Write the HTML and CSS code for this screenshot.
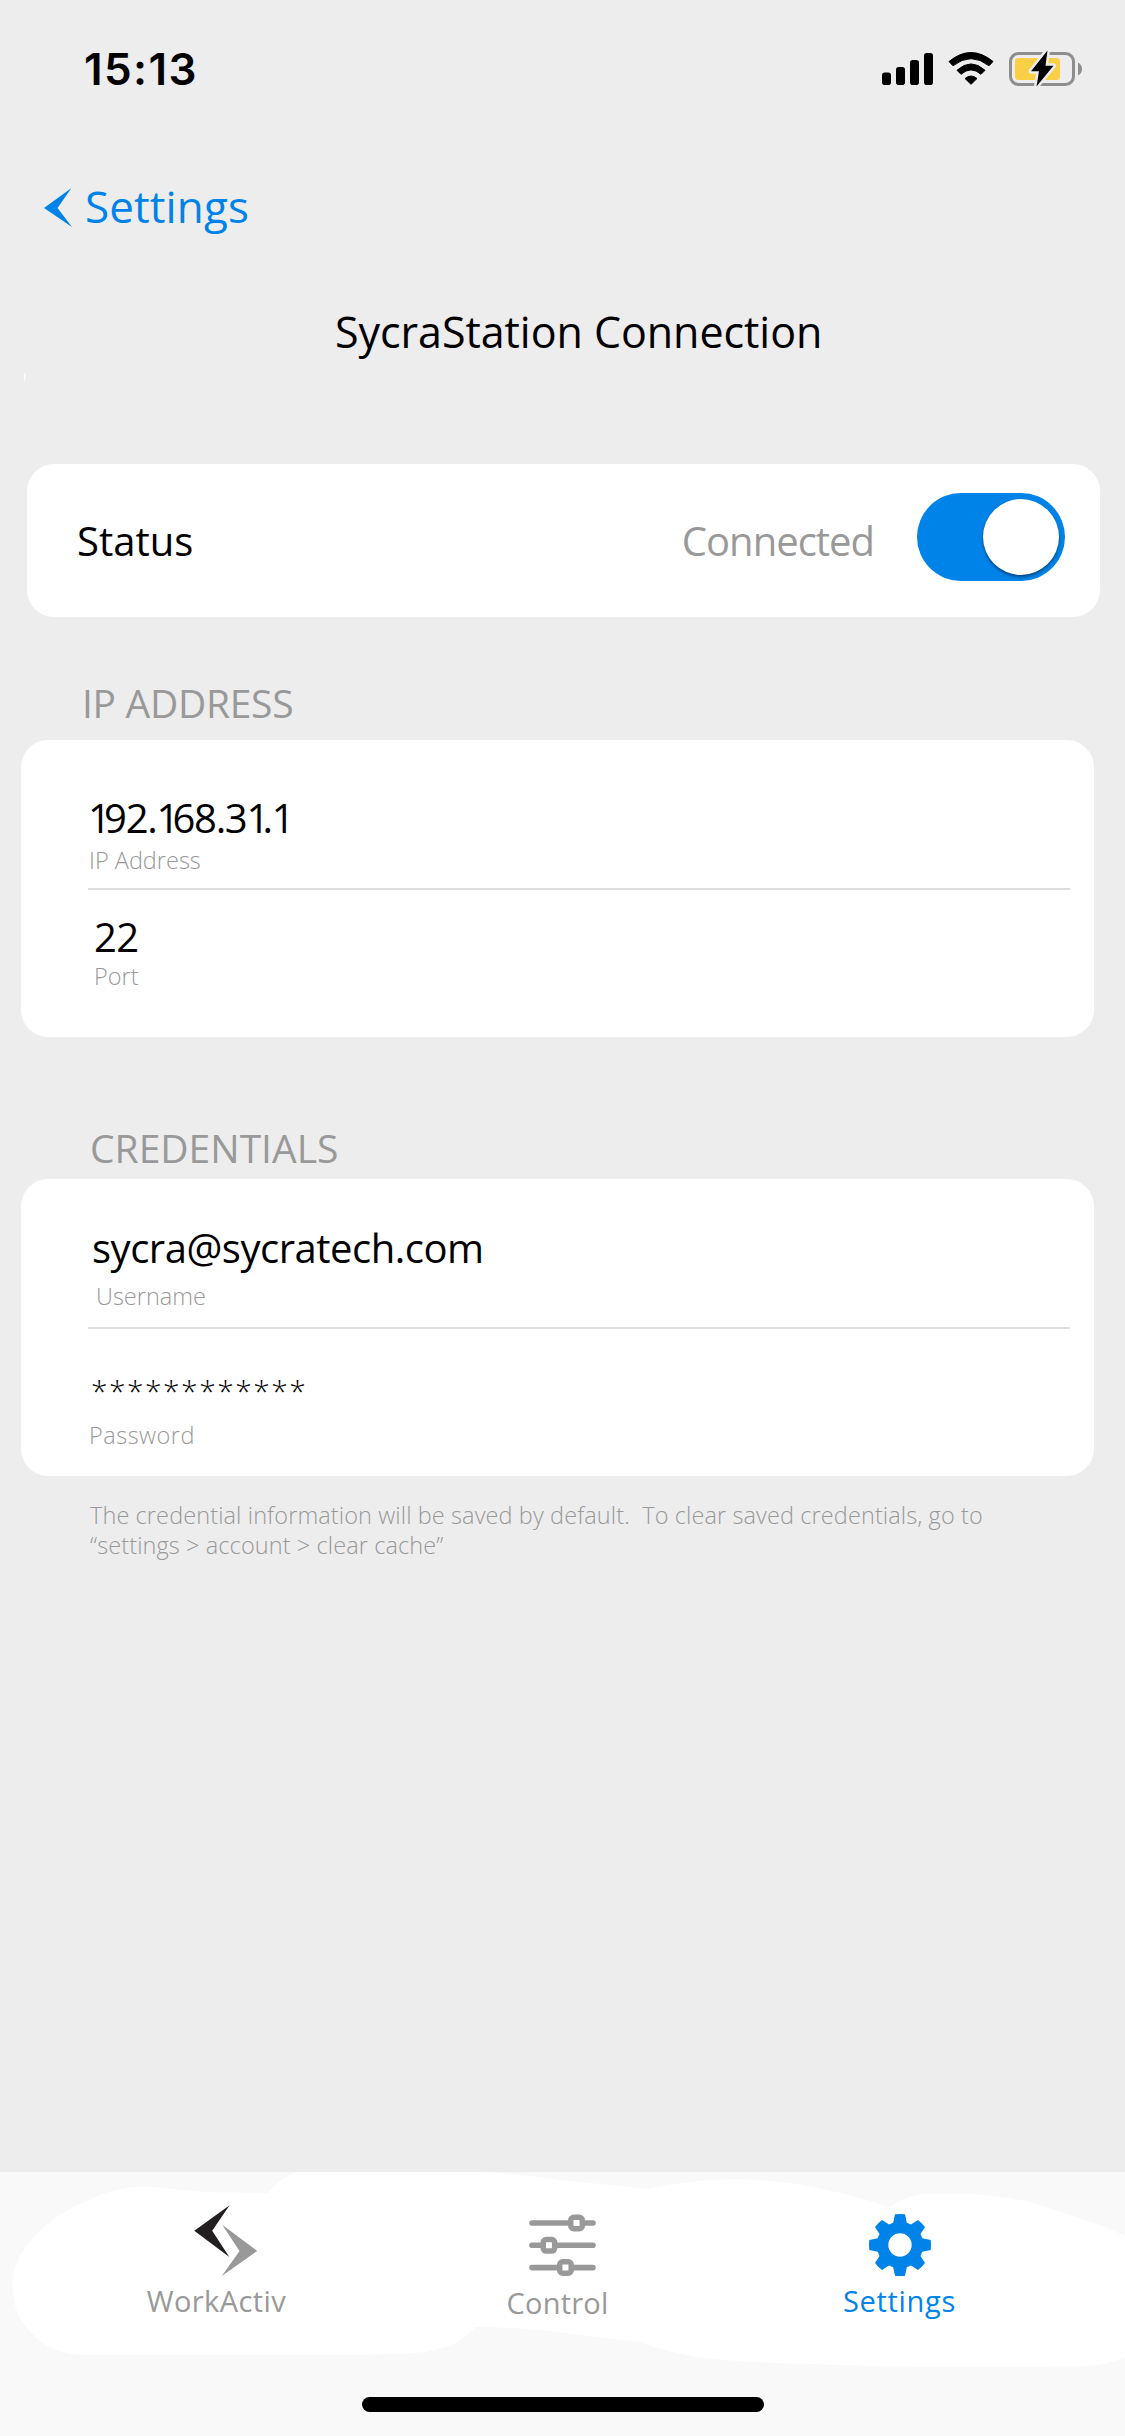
FILE: index.html
```html
<!DOCTYPE html>
<html lang="en">
<head>
<meta charset="utf-8">
<title>SycraStation Connection</title>
<link rel="stylesheet" href="styles.css">
</head>
<body>
<div class="screen">
  <header class="status-bar">
    <span class="time">15:13</span>
    <svg class="status-icons" width="204" height="40" viewBox="880 49 204 40">
      <rect x="882" y="72.5" width="9" height="12.5" rx="2.8"/>
      <rect x="896" y="67" width="9" height="18" rx="2.8"/>
      <rect x="910" y="60" width="9" height="25" rx="2.8"/>
      <rect x="924" y="53" width="9" height="32" rx="2.8"/>
      <path d="M949 61.500Q971 43.500 993 61.500L989 65.800Q971 51.500 953 65.800Z" stroke="#000" stroke-linejoin="round"/>
      <path d="M957 70.300Q971 57.500 985 70.300L981 74.300Q971 65.500 961 74.300Z" stroke="#000" stroke-linejoin="round"/>
      <path d="M965 78.500Q971 73.500 977 78.500L971 84.300Z" stroke="#000" stroke-linejoin="round"/>
      <rect x="1010.500" y="53.500" width="63" height="31" rx="8" fill="none" stroke="#8e8e8e" stroke-width="3"/>
      <rect x="1015" y="58" width="45" height="22" rx="3.500" fill="#f9cf45"/>
      <path d="M1078 62.500Q1082 64.500 1082 69Q1082 73.500 1078 75.500Z" fill="#8e8e8e"/>
      <path d="M1047.500 50.500L1031 71.200H1039L1036.500 86.500L1053.500 65.800H1045.500Z" fill="#000" stroke="#ededed" stroke-width="5" stroke-linejoin="round" paint-order="stroke"/>
    </svg>
  </header>

  <a class="back">
    <svg width="29" height="40" viewBox="44 189 29 40"><path d="M44 209L71.500 189L57.500 209L72 228Z" fill="#0083e8"/></svg>
    <span>Settings</span>
  </a>
  <h1 class="title">SycraStation Connection</h1>
  <svg class="fleck" width="3" height="12" viewBox="0 0 3 12"><path d="M0 0L2 4L0 11Z" fill="#fff"/></svg>

  <section class="card status-card">
    <span>Status</span>
    <span class="status-state">Connected</span>
    <span class="toggle"><span class="knob"></span></span>
  </section>

  <h2 class="section-title">IP ADDRESS</h2>
  <section class="card ip-card">
    <div class="value ip"><span class="one">1</span>92.<span class="one">1</span>68.3<span class="one">1</span>.1</div>
    <div class="label ip-label">IP Address</div>
    <hr class="divider">
    <div class="value port">22</div>
    <div class="label port-label">Port</div>
  </section>

  <h2 class="section-title cred-title">CREDENTIALS</h2>
  <section class="card cred-card">
    <div class="value user">sycra@sycratech.com</div>
    <div class="label user-label">Username</div>
    <hr class="divider cred-divider">
    <div class="value pass">************</div>
    <div class="label pass-label">Password</div>
  </section>
  <p class="note">The credential information will be saved by default.&nbsp; To clear saved credentials, go to<br>“settings &gt; account &gt; clear cache”</p>

  <footer class="tab-bar">
    <svg class="blob" width="1125" height="200" viewBox="0 0 1125 200">
      <path fill="#fff" d="M295 0Q280 7 268 20.700L225 20.500C185 20 165 14.700 143 14.700C120 15 107 20 93 26C72 35 56 44 43 56C22 75 12.500 92 12.500 115C13 138 23 155 39 168C52 179 68 183 86 183H343C375 182.500 400 182.500 425 180C450 176 464 168 475 155C500 154.500 530 157 557 160L637 169.700C655 175 675 182 704 186C740 190 770 191 812 192C860 194 910 195 956 195C1000 195 1050 195 1082 194C1100 194 1113 190 1125 185V64C1105 54 1080 46 1043 34C1010 24 980 22 956 22H928C912 22 900 28 888 35.700C875 30 862 26 848 23C805 12 770 7.300 733 7.300C700 7.500 675 12 648 17L560 8Q520 2 482 0Z"/>
    </svg>
    <nav class="tabs">
      <a class="tab work">
        <svg width="64" height="72" viewBox="194 2205 64 72"><path fill="#231f20" d="M229.600 2205.300L194.300 2230.700L229.300 2257L212.200 2230.700Z"/><path fill="#999" d="M222.200 2224.700L257.200 2251L221.800 2276L239.500 2251Z"/></svg>
        <span>WorkActiv</span>
      </a>
      <a class="tab control">
        <svg width="68" height="64" viewBox="528 2213 68 64" fill="none" stroke="#999" stroke-linecap="round">
          <path stroke-width="5.600" d="M532 2223H569M584 2223H593M532 2245.300H542M556 2245.300H593M532 2267.600H558M573 2267.600H593"/>
          <rect stroke-width="5.500" x="570.800" y="2217.200" width="11.500" height="11.500" rx="3"/>
          <rect stroke-width="5.500" x="543.200" y="2239.600" width="11.500" height="11.500" rx="3"/>
          <rect stroke-width="5.500" x="559.700" y="2261.800" width="11.500" height="11.500" rx="3"/>
        </svg>
        <span>Control</span>
      </a>
      <a class="tab settings">
        <svg width="64" height="64" viewBox="-32 -32 64 64"><path fill="#0083e8" fill-rule="evenodd" d="M-5 -30.700Q0 -31.300 5 -30.700L6.800 -22.300L11 -20.500L18 -25Q22 -22 25 -18L20.500 -11L22.300 -6.800L30.700 -5Q31.300 0 30.700 5L22.300 6.800L20.500 11L25 18Q22 22 18 25L11 20.500L6.800 22.300L5 30.700Q0 31.300 -5 30.700L-6.800 22.300L-11 20.500L-18 25Q-22 22 -25 18L-20.500 11L-22.300 6.800L-30.700 5Q-31.300 0 -30.700 -5L-22.300 -6.800L-20.500 -11L-25 -18Q-22 -22 -18 -25L-11 -20.500L-6.800 -22.300ZM0 -11.700A11.700 11.700 0 1 0 0 11.700A11.700 11.700 0 1 0 0 -11.700Z"/></svg>
        <span>Settings</span>
      </a>
    </nav>
    <div class="home-indicator"></div>
  </footer>
</div>
</body>
</html>
```
FILE: styles.css
```css
* { box-sizing: border-box; }
body { margin: 0; background: #ededed; color: #000; font-family: "Open Sans", "Noto Sans", sans-serif; }
.screen { position: relative; width: 1125px; height: 2436px; display: flex; flex-direction: column; overflow: hidden; }
.status-bar { height: 176px; padding: 49px 41px 0 84px; display: flex; justify-content: space-between; align-items: flex-start; }
.time { font: 600 44px/40px Inter, sans-serif; letter-spacing: 1.4px; }
.back { height: 60px; padding-left: 44px; display: flex; align-items: center; gap: 12px; color: #0083e8; font-size: 44px; line-height: 60px; letter-spacing: 0.1px; }
.back svg { margin-top: 4px; }
.title { margin: 66px 0 0; padding-left: 335px; font-size: 43px; line-height: 60px; font-weight: 400; letter-spacing: -0.05px; }
.fleck { position: absolute; left: 24px; top: 372px; }

.card { background: #fff; border-radius: 27px; width: 1073px; margin-left: 21px; }
.status-card { height: 153px; margin: 102px 0 0 27px; padding: 0 35px 0 50px; display: flex; align-items: center; font-size: 40px; }
.status-state { margin-left: auto; margin-right: 43px; color: #999; letter-spacing: -1px; }
.toggle { width: 148px; height: 88px; margin-bottom: 7px; border-radius: 44px; background: #0083e8; }
.knob { display: block; width: 76px; height: 76px; margin: 6px 0 0 66px; border-radius: 50%; background: #fff; box-shadow: 0 2px 3px rgba(0, 30, 70, 0.6); }

.section-title { margin: 61px 0 0; padding-left: 82px; font-size: 39px; line-height: 50px; font-weight: 400; letter-spacing: -0.3px; color: #999; }
.ip-card { height: 297px; margin-top: 12px; padding: 55.5px 24px 0 67px; }
.value { font-size: 40px; line-height: 44px; }
.ip { letter-spacing: -1.3px; }
.one { letter-spacing: -6.8px; }
.port { padding-left: 6px; letter-spacing: -0.5px; }
.label { margin-top: 5.5px; font-size: 23.5px; line-height: 30px; color: #999; font-weight: 300; }
.ip-label { padding-left: 1px; }
.port-label { margin-top: 2px; padding-left: 6px; }
.divider { border: 0; height: 2px; background: #dedede; margin: 13px 0 24.5px; }

.cred-title { margin-top: 86px; padding-left: 90px; letter-spacing: 0; }
.cred-card { height: 297px; margin-top: 6px; padding: 46.5px 24px 0 67px; }
.user { padding-left: 4px; letter-spacing: -0.48px; }
.user-label { margin-top: 11.5px; padding-left: 8px; }
.cred-divider { margin: 16px 0 40px; }
.pass { padding-left: 3px; font-size: 30px; font-weight: 300; letter-spacing: 1.5px; }
.pass-label { margin-top: 7px; padding-left: 1px; letter-spacing: 0.5px; }
.note { margin: 24px 0 0; padding-left: 90px; font-size: 23.5px; line-height: 30px; letter-spacing: 0.1px; color: #999; font-weight: 300; white-space: nowrap; }

.tab-bar { position: relative; height: 264px; margin-top: auto; background: #f9f9f9; }
.blob { position: absolute; left: 0; top: 0; }
.tabs { position: relative; height: 225px; padding: 33px 56px 0 50px; display: grid; grid-template-columns: 333px 349px 335px; }
.tab { display: flex; flex-direction: column; align-items: center; font-size: 29px; line-height: 40px; color: #999; }
.work svg { margin-left: 19px; }
.work span { margin-top: 4px; letter-spacing: 0.4px; }
.control svg { margin-top: 8px; margin-left: 8px; }
.control span { margin-top: 6px; letter-spacing: 0.2px; }
.settings { color: #0083e8; }
.settings svg { margin-top: 8px; }
.settings span { margin-top: 4px; letter-spacing: 0.7px; }
.home-indicator { width: 402px; height: 15px; margin-left: 362px; border-radius: 8px; background: #000; }
```
